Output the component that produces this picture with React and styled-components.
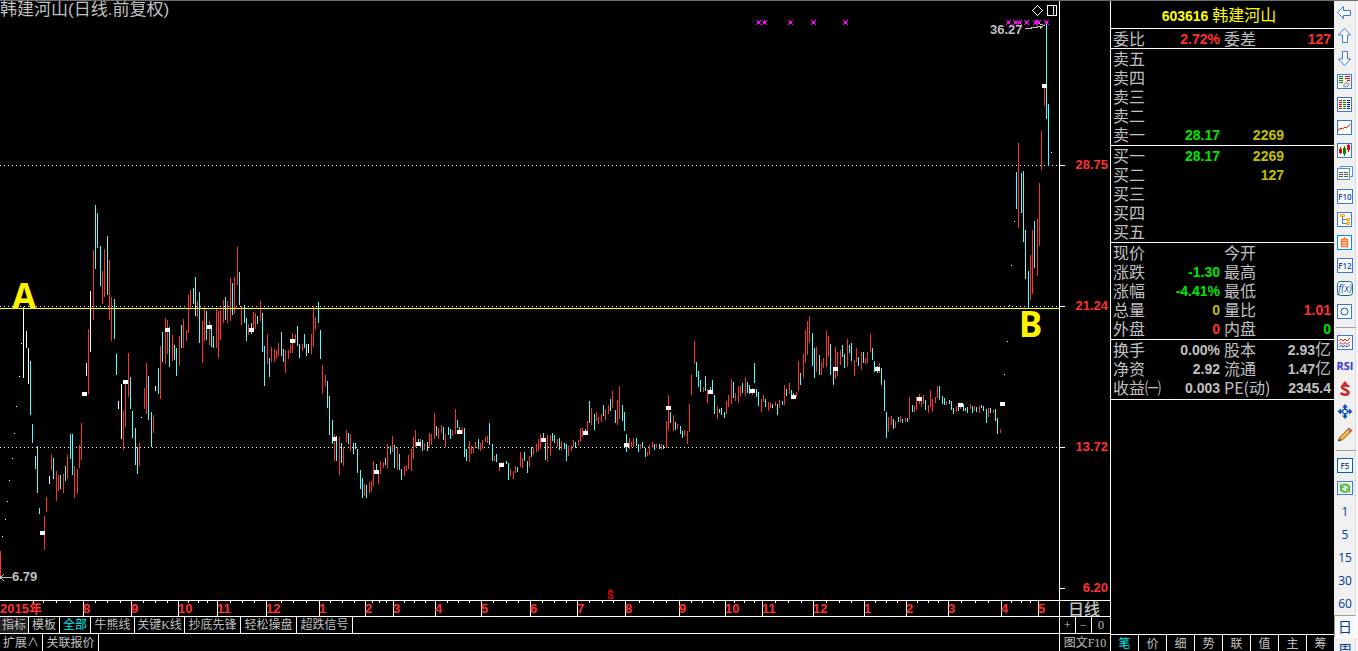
import React from 'react';
import styled, { createGlobalStyle } from 'styled-components';

const CHART_WIDTH = 1059;
const COLORS = { r: '#ff3232', c: '#54fcfc', w: '#ffffff' };
const CJK = '"Noto Sans CJK SC", sans-serif';

// x, colour, high-low
const BARS = `
0r551-577 23w307-378 26w331-348 28w348-384 30c361-415 32c424-443 35c456-469 37c446-493 39c508-514 44r516-550
46r497-512 49w476-484 51r454-470 53c458-479 56r471-501 58r475-491 60c475-489 63r474-493 65c466-481 67r455-479
70c434-459 72c434-475 74r466-498 77r469-493 79r445-468 81r423-460 86w363-376 88r329-394 90w291-352 93r250-320
95c205-269 97c213-248 100c246-286 102r271-304 104r249-297 107c236-295 109r260-320 111r297-341 114c299-339
116c354-375 118w401-409 121w384-439 123r411-450 125r382-427 128r353-397 130c377-409 132c411-438 135c428-465
137c447-474 139r443-466 144r388-409 146r363-414 148c376-420 151c412-447 153r415-433 155w386-391 158c368-394
160r346-399 162c332-362 165r318-364 167r320-354 169c327-367 172r335-361 174c345-360 176c348-376 179r336-366
181c325-348 183r319-348 186r330-341 188r295-333 190r290-308 193c288-304 195c277-316 197r301-317 199c292-343
202r321-363 204r306-341 206c311-340 209r321-345 211c327-347 213c336-348 216r309-348 218r311-358 220r310-340
223r300-323 225c297-320 227r301-323 230r278-321 232c283-315 234r277-314 237r247-285 239c272-305 241r306-325
244c305-323 246c318-341 248r324-335 251c323-334 253r312-329 255r313-329 257c316-324 260r301-321 262c313-352
264c346-386 267r334-364 269c358-377 271r347-362 274r349-362 276r350-359 278r343-356 281c332-356 283c349-362
285r350-373 288r350-359 290r344-353 292r333-353 295r334-343 297c326-346 299c344-358 302r344-351 304c334-348
306c344-356 308w344-353 311r334-354 313r306-347 315r317-330 318c302-323 320c330-359 322r365-394 325r375-386
327c381-408 329c396-435 332c420-444 334r434-461 336c436-461 339r437-475 341c443-463 343r447-466 346r430-442
348c433-444 350r434-451 353c443-454 355c443-449 357c449-473 360c470-489 362c478-498 364r484-496 366c485-498
369r482-493 371r481-492 373r461-486 376c464-471 378r470-484 380r461-474 383r462-468 385c458-465 387r444-468
390c446-454 392r436-452 394c445-468 397r447-470 399c454-470 401c469-480 404r466-476 406r466-471 408r455-469
411r449-471 413r437-459 415r430-447 418c439-444 420r439-448 422c440-451 424r443-450 427c442-451 429r433-448
431r434-445 434r413-439 436c426-436 438r428-439 441r425-433 443c427-440 445r434-447 448c427-435 450c429-439
452r430-436 455r409-434 457c420-428 459c427-431 462r428-434 464c428-457 466c449-461 469r441-462 471r446-454
473r447-453 475r442-448 478c439-449 480r443-451 482r440-449 485r437-442 487r436-443 489c423-445 492c444-461
494r456-461 496c454-462 499r466-471 501r462-464 503r462-465 506c461-464 508c463-480 510r469-476 513r471-479
515r466-473 517c467-472 520r452-467 522r458-468 524c452-461 527c461-473 529r456-467 531c447-457 533r448-455
536r444-452 538r439-451 540r434-449 543c433-438 545c443-460 547r435-462 550r435-456 552c433-441 554c435-443
557r439-447 559c438-450 561r441-450 564c443-449 566c444-461 568r446-456 571r446-451 573r440-447 575c442-448
578r440-445 580r428-442 582r428-437 585c429-431 587r421-431 589c401-423 591r408-425 594c414-430 596r412-421
598r417-424 601r414-422 603c405-416 605r409-420 608r405-414 610c399-411 612r391-408 615c410-423 617r400-425
619r386-419 622c405-421 624c412-431 626c434-452 629r438-449 631r442-447 633r438-447 636c438-446 638c444-452
640r444-449 642c442-448 645c448-457 647r452-456 649r445-455 652r442-448 654c444-450 656r444-448 659c444-449
661r444-450 663c445-449 666r421-448 668r395-430 670c412-423 673r415-431 675c422-430 677r424-429 680c426-434
682c431-438 684r430-436 687r431-444 689r404-432 691r374-395 694r341-364 696c362-377 698c371-387 700c380-392
703r387-392 705c376-391 707r389-403 710c387-390 712c380-390 714c395-414 717r406-419 719c409-413 721c408-415
724c412-418 726r401-414 728r395-407 731r379-404 733c382-398 735r393-401 738r386-403 740r386-396 742c383-393
745r377-396 747c382-393 749c385-394 752r388-395 754c363-383 756c389-397 758c392-406 761r399-412 763r395-402
765c399-407 768r402-411 770r403-408 772c404-408 775r402-406 777c404-415 779r400-408 782c401-405 784r385-405
786c389-396 789r383-394 791c390-395 793c393-396 796r392-397 798r361-391 800c373-385 803r354-378 805r330-363
807r321-355 809r316-343 812c333-366 814c348-378 816r347-372 819c355-375 821r362-375 823r358-368 826r331-367
828r336-357 830c344-375 833c368-385 835r347-379 837r352-376 840r350-365 842c345-357 844c354-368 847r339-367
849c345-353 851c343-361 854r360-376 856r348-362 858c357-366 861r352-370 863c352-363 865r358-364 867r352-363
870r334-352 872c348-360 874c361-372 877c366-373 879r363-373 881c368-385 884c380-411 886c412-438 888r417-432
891r416-425 893c419-429 895r421-428 898c417-422 900r416-422 902c419-423 905r418-422 907c418-422 909r397-420
912c405-412 914r406-412 916r397-410 919r394-404 921r400-407 923r395-404 925c400-410 928r405-413 930r390-407
932r399-412 935r397-403 937r386-398 939c386-400 942c396-404 944c398-405 946r401-405 949c400-404 951c401-410
953c408-414 956r406-412 958c405-411 960r404-409 963c404-411 965c408-411 967c407-413 970r404-409 972c406-413
974r406-411 976c407-412 979r406-413 981c405-408 983c406-411 986c409-423 988r408-417 990c408-413 993r410-413
995c409-421 997c418-434 1000r429-433 1016c172-209 1018r143-228 1021c173-213 1023c171-242 1025c230-279
1028c271-308 1030r255-300 1032r230-294 1034c221-268 1037r219-276 1039r183-246 1041r131-170 1044r88-106
1046c22-119 1048c104-166
`.trim().split(/\s+/).map(item => {
  const [, x, color, high, low] = item.match(/(\d+)([rcw])(\d+)-(\d+)/);
  return { x: +x, color: COLORS[color], high: +high, low: +low };
});

const DOTS = [
  [2, 536], [5, 519], [7, 501], [9, 480], [12, 458], [14, 433], [16, 406], [19, 376], [21, 343],
  [141, 417], [1004, 374], [1007, 341], [1009, 305], [1011, 265], [1014, 221], [1051, 152],
];

const MARKS = [
  [40, 531], [82, 392], [123, 380], [165, 328], [207, 325], [249, 328], [290, 339], [332, 437],
  [374, 470], [416, 442], [457, 430], [499, 463], [541, 438], [583, 431], [624, 443], [666, 406],
  [708, 390], [750, 389], [791, 395], [833, 367], [875, 367], [917, 397], [958, 403], [1000, 402],
  [1042, 84],
];

const CROSSES = [758, 764, 790, 813, 845, 1008, 1015, 1019, 1026, 1035, 1038, 1046];

const MONTHS = [
  [83, '8'], [131, '9'], [178, '10'], [217, '11'], [266, '12'], [319, '1'], [365, '2'], [393, '3'],
  [435, '4'], [481, '5'], [530, '6'], [577, '7'], [625, '8'], [679, '9'], [725, '10'], [762, '11'],
  [813, '12'], [864, '1'], [906, '2'], [948, '3'], [1001, '4'], [1038, '5'],
];

const WEEKS = [
  33, 43, 56, 70, 95, 107, 120, 143, 155, 167, 188, 198, 207, 230, 242, 254, 281, 293, 306, 330, 342,
  354, 372, 379, 386, 404, 414, 425, 447, 458, 469, 493, 506, 518, 542, 554, 566, 589, 602, 613, 639,
  653, 666, 691, 702, 713, 734, 744, 754, 775, 788, 801, 826, 839, 851, 875, 886, 897, 917, 928, 938,
  961, 975, 988, 1011, 1021, 1030,
];

const GlobalStyle = createGlobalStyle`
  * {
    box-sizing: border-box;
  }

  body {
    margin: 0;
    background-color: #000;
    color: #c0c0c0;
    font-family: "Liberation Sans", ${CJK};
  }

  button {
    margin: 0;
    padding: 0;
    border: none;
    background: none;
    color: inherit;
    font: inherit;
    cursor: pointer;
  }
`;

const Window = styled.div`
  display: flex;
  height: 100vh;
  min-height: 400px;
  border-top: 1px solid #6e6e6e;
  overflow: hidden;
`;

const ChartArea = styled.main`
  flex: 1;
  min-width: 0;
  display: grid;
  grid-template-columns: minmax(0, 1fr) 51px;
  grid-template-rows: minmax(0, 1fr) 16px 17px 18px;
`;

const Chart = styled.div`
  position: relative;
  overflow: hidden;
`;

const Drawing = styled.svg`
  display: block;
  width: 100%;
  height: 100%;
  shape-rendering: crispEdges;
`;

const Title = styled.h1`
  position: absolute;
  top: 0;
  left: 0;
  margin: 0;
  font-size: 17px;
  font-weight: 400;
  line-height: 18px;
  white-space: nowrap;
`;

const ChartLabel = styled.span`
  position: absolute;
  font-size: ${props => props.$big ? '35px' : '13px'};
  line-height: ${props => props.$big ? '36px' : '16px'};
  font-weight: 700;
  font-family: ${props => props.$big ? '"Noto Sans"' : '"Liberation Sans"'}, sans-serif;
  color: ${props => props.$big ? '#fff200' : '#c0c0c0'};
`;

const PriceAxis = styled.div`
  position: relative;
  border-left: 1px solid #fff;
`;

const Price = styled.span`
  position: absolute;
  right: 2px;
  transform: translateY(-50%);
  color: #ff3232;
  font-size: 13px;
  font-weight: 700;
  line-height: 16px;

  &::before {
    content: '';
    position: absolute;
    right: 43px;
    top: 8px;
    width: 5px;
    height: 1px;
    background-color: #fff;
  }
`;

const TimeAxis = styled.div`
  position: relative;
  border-top: 1px solid #fff;
  overflow: hidden;
`;

const Month = styled.span`
  position: absolute;
  top: 0;
  color: #ff3232;
  font-size: 13px;
  font-weight: 700;
  line-height: 16px;
`;

const PeriodCell = styled.button`
  && {
    padding-right: 2px;
    border-top: 1px solid #fff;
    border-left: 1px solid #fff;
    font: 500 16px/13px ${CJK};
  }
`;

const TabRow = styled.nav`
  display: flex;
  min-width: 0;
  border-top: 1px solid #fff;
  overflow: hidden;
`;

const Tab = styled.button`
  && {
    flex: none;
    width: ${props => props.$width}px;
    border-right: 1px solid #fff;
    background-color: ${props => props.$shaded ? '#202020' : 'transparent'};
    color: ${props => props.$active ? '#00f0f0' : '#c0c0c0'};
    font: 12px/16px "Liberation Serif", ${CJK};
    white-space: nowrap;
    overflow: hidden;
  }
`;

const Tools = styled.div`
  display: flex;
  border-top: 1px solid #fff;
  border-left: 1px solid #fff;
  background-color: #000;
`;

const Tool = styled.button`
  && {
    flex: ${props => props.$grow ? '1' : '0 0 16px'};
    border-right: ${props => props.$grow ? 'none' : '1px solid #fff'};
    font: 12px/16px "Liberation Serif", ${CJK};
    white-space: nowrap;
  }
`;

const Panel = styled.aside`
  flex: 0 0 224px;
  display: flex;
  flex-direction: column;
  border-left: 1px solid #fff;
`;

const StockName = styled.h2`
  margin: 0;
  padding-right: 7px;
  height: 28px;
  border-bottom: 1px solid #fff;
  color: #ff0;
  font-size: 14px;
  font-weight: 700;
  line-height: 27px;
  text-align: center;

  span {
    font: 400 16px/27px ${CJK};
  }
`;

const Section = styled.section`
  padding: 0 3px ${props => props.$gap || 0}px 2px;
  border-bottom: 1px solid #fff;
`;

const Table = styled.table`
  width: 100%;
  border-collapse: collapse;
  table-layout: fixed;
`;

const Label = styled.th`
  width: ${props => props.$second ? '50px' : '48px'};
  height: 19px;
  padding: 0 0 0 ${props => props.$second ? '3px' : '0'};
  font: 400 16px/19px ${CJK};
  text-align: left;
  white-space: nowrap;
`;

const tones = { red: '#ff3232', green: '#00e600', yellow: '#c0c000', grey: '#c0c0c0' };

const Value = styled.td`
  width: ${props => props.$width || 'auto'};
  height: 19px;
  padding: 2px ${props => props.$pad || 0}px 0 0;
  color: ${props => tones[props.$tone || 'grey']};
  font-size: 14px;
  font-weight: 700;
  line-height: 17px;
  text-align: right;
  white-space: nowrap;

  span {
    font: 400 16px/12px ${CJK};
  }
`;

const PanelTabs = styled.nav`
  display: flex;
  height: 17px;
  margin-top: auto;
  border-top: 1px solid #fff;
`;

const PanelTab = styled.button`
  && {
    flex: 1;
    border-right: 1px solid #fff;
    color: ${props => props.$active ? '#00f0f0' : '#c0c0c0'};
    font: 12px/16px ${CJK};
  }

  &&:last-child {
    border-right: none;
  }
`;

const Sidebar = styled.nav`
  flex: 0 0 24px;
  padding-right: 2px;
  border-right: 2px solid #f8f8f8;
  background-color: #f0f0f0;
  box-shadow: inset -1px 0 0 #dcdcdc;
  overflow: hidden;
`;

const SideButton = styled.button`
  && {
    display: flex;
    align-items: center;
    justify-content: center;
    width: 22px;
    height: 23px;
    border: ${props => props.$pressed ? '1px solid #a0a0a0' : 'none'};
    border-right-color: #fff;
    border-bottom-color: #fff;
    background-color: ${props => props.$pressed ? '#f8f8f8' : 'transparent'};
    color: #003c8c;
    font: ${props => props.$cjk ? '14px' : '12px'}/16px "Open Sans", ${CJK};
  }
`;

const Divider = styled.hr`
  width: 20px;
  height: 1px;
  margin: 4px 0 3px 2px;
  border: none;
  background-color: #a0a0a0;
`;

const Box = ({ stroke = '#3a78e0', round = 0, children }) => (
  <>
    <rect x="0.5" y="0.5" width="14" height="14" rx={round} fill="#fff" stroke={stroke} />
    {children}
  </>
);

// box with a short word made of plain strokes
const StrokeWord = ({ d, stroke }) => (
  <>
    <rect x="0.5" y="0.5" width="15" height="14" fill="#fff" stroke={stroke || '#3a78e0'} />
    <text x="8" y="11" fontSize="8" fontWeight="600" fill="#1446b4" textAnchor="middle" fontFamily="Open Sans, sans-serif">{d}</text>
  </>
);

const arrow = { fill: '#fff', stroke: '#3a78e0' };

const ICONS = {
  back: <path d="M0.500 7.500 6.500 1.500V5.500H13.500V10.500H6.500V13.500Z" {...arrow} />,
  up: <path d="M7.500 0.500 13.500 7H10.500V14.500H5.500V7H1.500Z" {...arrow} />,
  down: <path d="M7.500 14.500 13.500 8H10.500V0.500H5.500V8H1.500Z" {...arrow} />,
  quotes: (
    <Box>
      <path d="M2 2.500H6M2 4.500H6M2 6.500H6M2 8.500H6" fill="none" stroke="#008a00" />
      <path d="M8 2.500H13M8 4.500H13M10 6.500H13" fill="none" stroke="#f00000" />
      <path d="M6.500 12.500 7.500 9.500 10.500 7.500M6.500 12.500 10 13 13 9.500M9 11 12 8.500" fill="none" stroke="#777" />
    </Box>
  ),
  list: (
    <Box>
      <path d="M2 3.500H5M2 5.500H5M2 7.500H5M2 9.500H5M2 11.500H5" fill="none" stroke="#f00000" />
      <path d="M6 3.500H9M6 5.500H9M6 7.500H9M6 9.500H9M6 11.500H9" fill="none" stroke="#008a00" />
      <path d="M10 3.500H13M10 5.500H13M10 7.500H13M10 9.500H13M10 11.500H13" fill="none" stroke="#0000f0" />
    </Box>
  ),
  trend: <Box><path d="M1 10.500 4 8 5.500 9 8 7 9.500 8 13.500 4" fill="none" stroke="#e00000" /></Box>,
  candles: (
    <Box>
      <path d="M3.500 4V11M11.500 1V9" stroke="#f00000" />
      <path d="M2 6H5V10H2ZM10 2H13V7H10Z" fill="#f00000" />
      <path d="M7.500 3V13" stroke="#008a00" />
      <path d="M6 5H9V11H6Z" fill="#008a00" />
    </Box>
  ),
  pages: (
    <>
      <path d="M3.500 3V0.500H15.500V10.500H13" fill="#fff" stroke="#4a90e8" />
      <rect x="0.5" y="2.500" width="12" height="11" fill="#fff" stroke="#4a90e8" />
      <path d="M2 6.500H6M7 6.500H11M2 8.500H6M7 8.500H11M2 10.500H6M7 10.500H11" fill="none" stroke="#555" />
    </>
  ),
  f10: <StrokeWord d="F10" />,
  tree: (
    <Box>
      <path d="M5.500 4V11.500H9M5.500 7.500H9" fill="none" stroke="#4a78e0" />
      <path d="M3.500 2.500H7.500V4.500H3.500ZM9.500 6.500H12.500V8.500H9.500ZM9.500 10.500H12.500V12.500H9.500Z" fill="#ffe060" stroke="#f0a000" />
    </Box>
  ),
  self: (
    <Box stroke="#0090e8">
      <path d="M4.500 4.500H10.500V11.500H4.500ZM5 6.500H10M5 9H10M7.500 2V4" fill="none" stroke="#f87838" strokeWidth="1.500" />
    </Box>
  ),
  f12: <StrokeWord d="F12" />,
  formula: (
    <>
      <rect x="0.5" y="0.5" width="15" height="14" rx="3" fill="#fff" stroke="#007878" />
      <text x="8" y="11" fontSize="10" fontStyle="italic" fill="#1446b4" textAnchor="middle" fontFamily="Open Sans, sans-serif">f(x)</text>
    </>
  ),
  circle: <Box><circle cx="7.500" cy="7.500" r="3.500" fill="none" stroke="#0050c8" /></Box>,
  waves: (
    <>
      <rect x="0.5" y="0.5" width="15" height="14" fill="#fff" stroke="#3a78e0" />
      <path d="M2 6 4 4 6 6 8 4 10 6 13 3" fill="none" stroke="#e02020" />
      <path d="M2 9.500 4 7.500 6 9.500 8 7.500 10 9.500 13 6.500" fill="none" stroke="#e02020" />
      <path d="M2 12 4 10.500 6 12 8 10.500 10 12 13 9.500" fill="none" stroke="#2040e0" />
    </>
  ),
  rsi: <text x="8" y="12" fontSize="11" fontWeight="700" fill="#3838d8" textAnchor="middle" fontFamily="Open Sans, sans-serif">RSI</text>,
  dollar: (
    <>
      <path d="M13 6C11 4 6 5 6.500 7.500S13 9.500 12.500 12 8 15 5 13" fill="none" stroke="#aaa" strokeWidth="2" />
      <path d="M11.500 5.500C9.500 3.500 4.500 4 5 6.500S11.500 8.500 11 11.500 6 14 3.500 12" fill="none" stroke="#d02828" strokeWidth="2.500" />
      <path d="M8 0 11 3.500H5Z" fill="#d02828" />
    </>
  ),
  move: (
    <>
      <path d="M8 0 11 3.500H5ZM8 15 11 11.500H5ZM0.500 7.500 4 4.500V10.500ZM15.500 7.500 12 4.500V10.500Z" fill="#0a50b8" />
      <path d="M8 3V12M3 7.500H13" stroke="#0a50b8" strokeWidth="2" />
      <rect x="6" y="5.500" width="4" height="4" fill="#f0f0f0" stroke="#0a50b8" />
    </>
  ),
  pencil: (
    <>
      <path d="M1.500 14 3 10 11 2 14 4.500 6 12.500Z" fill="#f0a030" stroke="#a86818" />
      <path d="M10.500 2.500 12 1 15 3.500 13.500 5Z" fill="#e07878" stroke="#a05050" />
      <path d="M4 11 12 3.500" stroke="#ffe0a0" />
      <path d="M1 14.500 2 11.500 4 13.500Z" fill="#444" />
    </>
  ),
  f5: <StrokeWord d="F5" stroke="#0060c0" />,
  refresh: (
    <>
      <rect x="0.5" y="0.5" width="15" height="13" fill="#fff" stroke="#3a78e0" />
      <rect x="2" y="2" width="12" height="10" fill="#d8f0d0" />
      <path d="M12 8A4 3.500 0 0 0 5.500 4.500M4 6.500A4 3.500 0 0 0 10.500 10" fill="none" stroke="#58b850" strokeWidth="2" />
      <path d="M3 2.500V7H7.500ZM13 12V7.500H8.500Z" fill="#58b850" />
    </>
  ),
};

const TOOL_GROUPS = [
  [['back', '后退'], ['up', '上翻'], ['down', '下翻'], ['quotes', '报价'], ['list', '列表'], ['trend', '分时'],
    ['candles', 'K线'], ['pages', '多页'], ['f10', 'F10'], ['tree', '板块'], ['self', '自选'], ['f12', 'F12'],
    ['formula', '公式'], ['circle', '画图']],
  [['waves', '叠加'], ['rsi', 'RSI'], ['dollar', '资金'], ['move', '移动'], ['pencil', '画线']],
  [['f5', 'F5'], ['refresh', '刷新']],
];

const Icon = ({ name }) => (
  <svg width="16" height="15" viewBox="0 0 16 15" aria-hidden="true">{ICONS[name]}</svg>
);

const toPercent = x => `${x / CHART_WIDTH * 100}%`;

function CandleChart() {
  return (
    <Chart>
      <Drawing viewBox="0 1 1059 599" preserveAspectRatio="none">
        {[165, 306, 447].map(y => (
          <path key={y} d={`M0 ${y + 0.5}H1059`} stroke="#fff" strokeDasharray="1 3" />
        ))}
        {BARS.map(bar => (
          <rect key={bar.x} x={bar.x} y={bar.high} width="1" height={bar.low - bar.high} fill={bar.color} />
        ))}
        {DOTS.map(([x, y]) => <rect key={x} x={x} y={y} width="1" height="1" fill="#fff" />)}
        {MARKS.map(([x, y]) => <rect key={x} x={x} y={y} width="5" height="4" fill="#fff" />)}
        <rect x="0" y="308" width="1059" height="1" fill="#ff0" />
        {CROSSES.map(x => (
          <path
            key={x}
            d={`M${x - 2} 20h1v1h3v-1h1v1h-1v3h1v1h-1v-1h-3v1h-1v-1h1v-3h-1z`}
            fill="#f0f"
          />
        ))}
        <path d="M1025 28.5H1031V27.5H1037V26.5H1043M1039 23.5 1044 25.5 1040 28.5" fill="none" stroke="#c0c0c0" />
        <path d="M0 577.5H12M4 574.5 0 577.5 4 580.5" fill="none" stroke="#c0c0c0" />
        <path d="M1037.500 5.500 1042.500 10.500 1037.500 15.500 1032.500 10.500Z" fill="none" stroke="#fff" />
        <path d="M1047.500 5.500H1056.500V15.500H1047.500ZM1053.500 5V15" fill="none" stroke="#fff" />
        <path d="M610.500 589 613.500 592H607.500Z" fill="#e00000" />
      </Drawing>
      <Title>韩建河山(日线.前复权)</Title>
      <ChartLabel style={{ left: toPercent(990), top: 21 }}>36.27</ChartLabel>
      <ChartLabel style={{ left: toPercent(12), top: '94.8%' }}>6.79</ChartLabel>
      <ChartLabel $big style={{ left: toPercent(12), top: '46.2%' }}>A</ChartLabel>
      <ChartLabel $big style={{ left: toPercent(1019), top: '50.9%' }}>B</ChartLabel>
      <ChartLabel style={{ left: toPercent(607), bottom: -4, fontSize: 10, color: '#e00000' }}>S</ChartLabel>
    </Chart>
  );
}

function Timeline() {
  return (
    <TimeAxis>
      <Drawing viewBox="0 0 1059 15" preserveAspectRatio="none">
        {MONTHS.map(([x]) => <rect key={x} x={x} y="0" width="1" height="15" fill="#fff" />)}
        {WEEKS.map(x => <rect key={x} x={x} y="0" width="1" height="2" fill="#fff" />)}
      </Drawing>
      <Month style={{ left: 0 }}>2015年</Month>
      {MONTHS.map(([x, label]) => (
        <Month key={x} style={{ left: toPercent(x) }}>{label}</Month>
      ))}
    </TimeAxis>
  );
}

function OrderBook({ rows }) {
  return (
    <Section $gap={1}>
      <Table>
        <tbody>
          {rows.map(([label, price, volume]) => (
            <tr key={label}>
              <Label scope="row">{label}</Label>
              <Value $width="59px" $tone="green">{price}</Value>
              <Value $width="64px" $tone="yellow">{volume}</Value>
              <Value />
            </tr>
          ))}
        </tbody>
      </Table>
    </Section>
  );
}

function Quotes({ rows, gap }) {
  return (
    <Section $gap={gap}>
      <Table>
        <tbody>
          {rows.map(([label, value, tone, label2, value2, tone2, unit]) => (
            <tr key={label}>
              <Label scope="row">{label}</Label>
              <Value $tone={tone} $pad={1}>{value}</Value>
              <Label scope="row" $second>{label2}</Label>
              <Value $tone={tone2}>{value2}{unit && <span>{unit}</span>}</Value>
            </tr>
          ))}
        </tbody>
      </Table>
    </Section>
  );
}

function App() {
  return (
    <>
      <GlobalStyle />
      <Window>
        <ChartArea>
          <CandleChart />
          <PriceAxis>
            <Price style={{ top: '27.4%' }}>28.75</Price>
            <Price style={{ top: '51%' }}>21.24</Price>
            <Price style={{ top: '74.5%' }}>13.72</Price>
            <Price style={{ top: '98%' }}>6.20</Price>
          </PriceAxis>
          <Timeline />
          <PeriodCell>日线</PeriodCell>
          <TabRow>
            <Tab $width={29} $shaded>指标</Tab>
            <Tab $width={31}>模板</Tab>
            <Tab $width={31} $active>全部</Tab>
            <Tab $width={44}>牛熊线</Tab>
            <Tab $width={50}>关键K线</Tab>
            <Tab $width={56}>抄底先锋</Tab>
            <Tab $width={56}>轻松操盘</Tab>
            <Tab $width={56}>超跌信号</Tab>
          </TabRow>
          <Tools>
            <Tool>+</Tool>
            <Tool>−</Tool>
            <Tool $grow>0</Tool>
          </Tools>
          <TabRow>
            <Tab $width={43}>扩展∧</Tab>
            <Tab $width={56}>关联报价</Tab>
          </TabRow>
          <Tools>
            <Tool $grow>图文F10</Tool>
          </Tools>
        </ChartArea>

        <Panel>
          <StockName>603616 <span>韩建河山</span></StockName>
          <Quotes rows={[['委比', '2.72%', 'red', '委差', '127', 'red']]} />
          <OrderBook
            rows={[['卖五'], ['卖四'], ['卖三'], ['卖二'], ['卖一', '28.17', '2269']]}
          />
          <OrderBook
            rows={[['买一', '28.17', '2269'], ['买二', '', '127'], ['买三'], ['买四'], ['买五']]}
          />
          <Quotes
            gap={1}
            rows={[
              ['现价', '', '', '今开', '', ''],
              ['涨跌', '-1.30', 'green', '最高', '', ''],
              ['涨幅', '-4.41%', 'green', '最低', '', ''],
              ['总量', '0', 'yellow', '量比', '1.01', 'red'],
              ['外盘', '0', 'red', '内盘', '0', 'green'],
            ]}
          />
          <Quotes
            gap={2}
            rows={[
              ['换手', '0.00%', 'grey', '股本', '2.93', 'grey', '亿'],
              ['净资', '2.92', 'grey', '流通', '1.47', 'grey', '亿'],
              ['收益㈠', '0.003', 'grey', 'PE(动)', '2345.4', 'grey'],
            ]}
          />
          <PanelTabs>
            {['笔', '价', '细', '势', '联', '值', '主', '筹'].map((name, i) => (
              <PanelTab key={name} $active={i === 0}>{name}</PanelTab>
            ))}
          </PanelTabs>
        </Panel>

        <Sidebar>
          {TOOL_GROUPS.map((group, i) => (
            <React.Fragment key={i}>
              {i > 0 && <Divider />}
              {group.map(([name, label]) => (
                <SideButton key={name} aria-label={label}><Icon name={name} /></SideButton>
              ))}
            </React.Fragment>
          ))}
          {['1', '5', '15', '30', '60'].map(minutes => (
            <SideButton key={minutes}>{minutes}</SideButton>
          ))}
          <SideButton $cjk $pressed>日</SideButton>
          <SideButton $cjk>周</SideButton>
        </Sidebar>
      </Window>
    </>
  );
}

export default App;
